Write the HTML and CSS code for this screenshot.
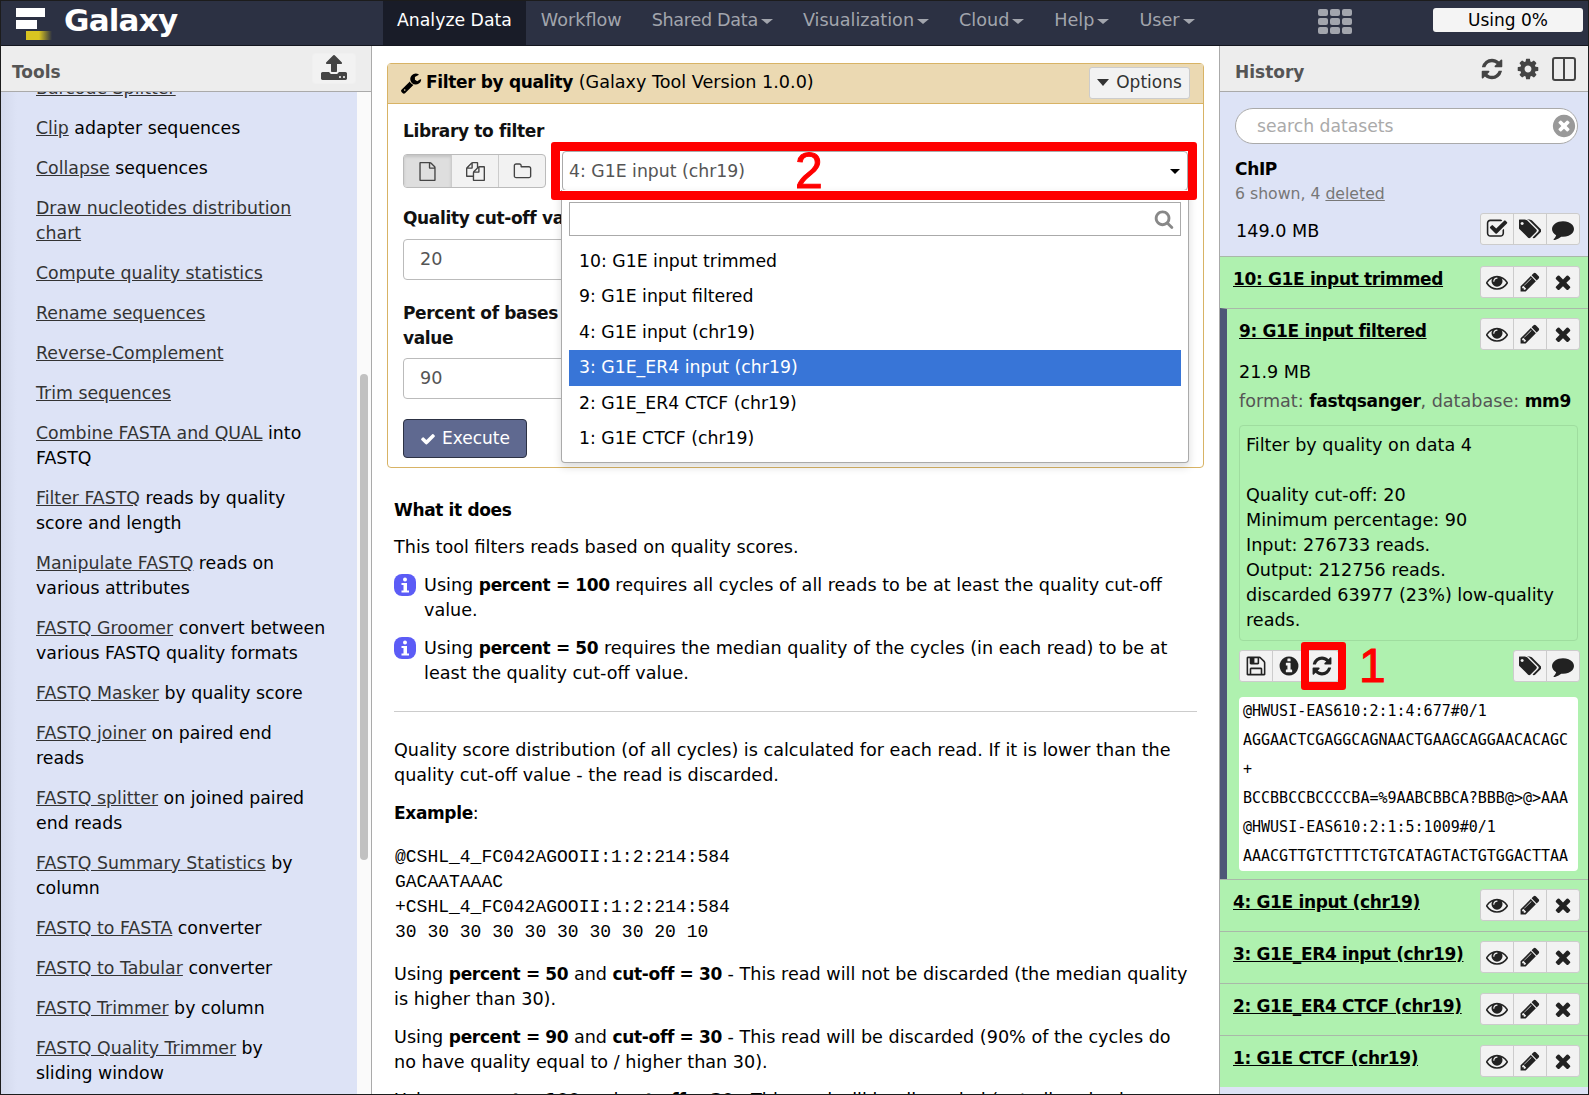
FILE: index.html
```html
<!DOCTYPE html>
<html lang="en">
<head>
    <meta charset="UTF-8">
    <title>Galaxy</title>
    <link rel="stylesheet" href="styles.css">
</head>
<body>
    <svg class="sprite" xmlns="http://www.w3.org/2000/svg">
        <symbol id="i-refresh" viewBox="0 0 1792 1792"><path d="M1639 1056q0 5-1 7-64 268-268 434.5t-478 166.5q-146 0-282.5-55t-243.5-157l-129 129q-19 19-45 19t-45-19-19-45v-448q0-26 19-45t45-19h448q26 0 45 19t19 45-19 45l-137 137q71 66 161 102t187 36q134 0 250-65t186-179q11-17 53-117 8-23 30-23h192q13 0 22.5 9.5t9.5 22.5zm25-800v448q0 26-19 45t-45 19h-448q-26 0-45-19t-19-45 19-45l138-138q-148-137-349-137-134 0-250 65t-186 179q-11 17-53 117-8 23-30 23h-199q-13 0-22.5-9.5t-9.5-22.5v-7q65-268 270-434.5t480-166.5q146 0 284 55.5t245 156.5l130-129q19-19 45-19t45 19 19 45z"/></symbol>
        <symbol id="i-cog" viewBox="0 0 1792 1792"><path d="M1152 896q0-106-75-181t-181-75-181 75-75 181 75 181 181 75 181-75 75-181zm512-109v222q0 12-8 23t-20 13l-185 28q-19 54-39 91 35 50 107 138 10 12 10 25t-9 23q-27 37-99 108t-94 71q-12 0-26-9l-138-108q-44 23-91 38-16 136-29 186-7 28-36 28h-222q-14 0-24.5-8.5t-11.5-21.5l-28-184q-49-16-90-37l-141 107q-10 9-25 9-14 0-25-11-126-114-165-168-7-10-7-23 0-12 8-23 15-21 51-66.5t54-70.5q-27-50-41-99l-183-27q-13-2-21-12.5t-8-23.5v-222q0-12 8-23t19-13l186-28q14-46 39-92-40-57-107-138-10-12-10-24 0-10 9-23 26-36 98.5-107.5t94.5-71.5q13 0 26 10l138 107q44-23 91-38 16-136 29-186 7-28 36-28h222q14 0 24.5 8.5t11.5 21.5l28 184q49 16 90 37l142-107q9-9 24-9 13 0 25 10 129 119 165 170 7 8 7 22 0 12-8 23-15 21-51 66.5t-54 70.5q26 50 41 98l183 28q13 2 21 12.5t8 23.5z"/></symbol>
        <symbol id="i-columns" viewBox="0 0 24 24"><rect x="1" y="1" width="22" height="22" rx="2" fill="none" stroke="currentColor" stroke-width="2"/><rect x="11" y="1" width="2" height="22"/></symbol>
        <symbol id="i-eye" viewBox="0 0 1792 1792"><path d="M1664 960q-152-236-381-353 61 104 61 225 0 185-131.5 316.5t-316.5 131.5-316.5-131.5-131.5-316.5q0-121 61-225-229 117-381 353 133 205 333.5 326.5t434.5 121.5 434.5-121.5 333.5-326.5zm-720-384q0-20-14-34t-34-14q-125 0-214.5 89.5t-89.5 214.5q0 20 14 34t34 14 34-14 14-34q0-86 61-147t147-61q20 0 34-14t14-34zm848 384q0 34-20 69-140 230-376.5 368.5t-499.5 138.5-499.5-139-376.5-368q-20-35-20-69t20-69q140-229 376.5-368t499.5-139 499.5 139 376.5 368q20 35 20 69z"/></symbol>
        <symbol id="i-pencil" viewBox="0 0 1792 1792"><path d="M491 1536l91-91-235-235-91 91v107h128v128h107zm523-928q0-22-22-22-10 0-17 7l-542 542q-7 7-7 17 0 22 22 22 10 0 17-7l542-542q7-7 7-17zm-54-192l416 416-832 832h-416v-416zm683 96q0 53-37 90l-166 166-416-416 166-165q36-38 90-38 53 0 91 38l235 234q37 39 37 91z"/></symbol>
        <symbol id="i-times" viewBox="0 0 1792 1792"><path d="M1490 1322q0 40-28 68l-136 136q-28 28-68 28t-68-28l-294-294-294 294q-28 28-68 28t-68-28l-136-136q-28-28-28-68t28-68l294-294-294-294q-28-28-28-68t28-68l136-136q28-28 68-28t68 28l294 294 294-294q28-28 68-28t68 28l136 136q28 28 28 68t-28 68l-294 294 294 294q28 28 28 68z"/></symbol>
        <symbol id="i-tags" viewBox="0 0 1792 1792"><path d="M384 448q0-53-37.5-90.5t-90.5-37.5-90.5 37.5-37.5 90.5 37.5 90.5 90.5 37.5 90.5-37.5 37.5-90.5zm1067 576q0 53-37 90l-491 492q-39 37-91 37-53 0-90-37l-715-716q-38-37-64.5-101t-26.5-117v-416q0-52 38-90t90-38h416q53 0 117 26.5t102 64.5l715 714q37 39 37 91zm384 0q0 53-37 90l-491 492q-39 37-91 37-36 0-59-14t-53-45l470-470q37-37 37-90 0-52-37-91l-715-714q-38-38-102-64.5t-117-26.5h224q53 0 117 26.5t102 64.5l715 714q37 39 37 91z"/></symbol>
        <symbol id="i-comment" viewBox="0 0 1792 1792"><path d="M1792 896q0 174-120 321.5t-326 233-450 85.5q-70 0-145-8-198 175-460 242-49 14-114 22-17 2-30.5-9t-17.5-29v-1q-3-4-.5-12t2-10 4.5-9.5l6-9 7-8.5 8-9q7-8 31-34.5t34.5-38 31-39.5 32.5-51 27-59 26-76q-157-89-247.5-220t-90.5-281q0-130 71-248.5t191-204.5 286-136.5 348-50.5q244 0 450 85.5t326 233 120 321.5z"/></symbol>
        <symbol id="i-check-square" viewBox="0 0 1792 1792"><path d="M1472 930v318q0 119-84.5 203.5t-203.5 84.5h-832q-119 0-203.5-84.5t-84.5-203.5v-832q0-119 84.5-203.5t203.5-84.5h832q63 0 117 25 15 7 18 23 3 17-9 29l-49 49q-10 10-23 10-3 0-9-2-23-6-45-6h-832q-66 0-113 47t-47 113v832q0 66 47 113t113 47h832q66 0 113-47t47-113v-254q0-13 9-22l64-64q10-10 23-10 6 0 12 3 20 8 20 29zm231-489l-814 814q-24 24-57 24t-57-24l-430-430q-24-24-24-57t24-57l110-110q24-24 57-24t57 24l263 263 647-647q24-24 57-24t57 24l110 110q24 24 24 57t-24 57z"/></symbol>
        <symbol id="i-info" viewBox="0 0 1792 1792"><path d="M1152 1376v-160q0-14-9-23t-23-9h-96v-512q0-14-9-23t-23-9h-320q-14 0-23 9t-9 23v160q0 14 9 23t23 9h96v320h-96q-14 0-23 9t-9 23v160q0 14 9 23t23 9h448q14 0 23-9t9-23zm-128-896v-160q0-14-9-23t-23-9h-192q-14 0-23 9t-9 23v160q0 14 9 23t23 9h192q14 0 23-9t9-23zm640 416q0 209-103 385.5t-279.5 279.5-385.5 103-385.5-103-279.5-279.5-103-385.5 103-385.5 279.5-279.5 385.5-103 385.5 103 279.5 279.5 103 385.5z"/></symbol>
        <symbol id="i-note" viewBox="0 0 22 22"><rect width="22" height="22" rx="8"/><circle cx="11" cy="5.5" r="2" fill="#fff"/><rect x="9.5" y="9" width="3.5" height="9" fill="#fff"/><rect x="7.5" y="9" width="3" height="2" fill="#fff"/><rect x="7.5" y="16.5" width="7.5" height="2" fill="#fff"/></symbol>
        <symbol id="i-save" viewBox="0 0 1792 1792"><path d="M512 1536h768v-384h-768v384zm896 0h128v-896q0-14-10-38.5t-20-34.5l-281-281q-10-10-34-20t-39-10v416q0 40-28 68t-68 28h-576q-40 0-68-28t-28-68v-416h-128v1280h128v-416q0-40 28-68t68-28h832q40 0 68 28t28 68v416zm-384-928v-320q0-13-9.5-22.5t-22.5-9.5h-192q-13 0-22.5 9.5t-9.5 22.5v320q0 13 9.5 22.5t22.5 9.5h192q13 0 22.5-9.5t9.5-22.5zm640 32v928q0 40-28 68t-68 28h-1344q-40 0-68-28t-28-68v-1344q0-40 28-68t68-28h928q40 0 88 20t76 48l280 280q28 28 48 76t20 88z"/></symbol>
        <symbol id="i-wrench" viewBox="0 0 1792 1792"><path d="M448 1472q0-26-19-45t-45-19-45 19-19 45 19 45 45 19 45-19 19-45zm644-420l-682 682q-37 37-90 37-52 0-91-37l-106-108q-38-36-38-90 0-53 38-91l681-681q39 98 114.5 173.5t173.5 114.5zm634-435q0 39-23 106-47 134-164.5 217.5t-258.5 83.5q-185 0-316.5-131.5t-131.5-316.5 131.5-316.5 316.5-131.5q58 0 121.5 16.5t107.5 46.5q16 11 16 28t-16 28l-293 169v224l193 107q5-3 79-48.5t135.5-81 70.5-35.5q15 0 23.5 10t8.5 25z"/></symbol>
        <symbol id="i-check" viewBox="0 0 1792 1792"><path d="M1671 566q0 40-28 68l-724 724-136 136q-28 28-68 28t-68-28l-136-136-362-362q-28-28-28-68t28-68l136-136q28-28 68-28t68 28l294 295 656-657q28-28 68-28t68 28l136 136q28 28 28 68z"/></symbol>
        <symbol id="i-search" viewBox="0 0 1792 1792"><path d="M1216 832q0-185-131.5-316.5t-316.5-131.5-316.5 131.5-131.5 316.5 131.5 316.5 316.5 131.5 316.5-131.5 131.5-316.5zm512 832q0 52-38 90t-90 38q-54 0-90-38l-343-342q-179 124-399 124-143 0-273.5-55.5t-225-150-150-225-55.5-273.5 55.5-273.5 150-225 225-150 273.5-55.5 273.5 55.5 225 150 150 225 55.5 273.5q0 220-124 399l343 343q37 37 37 90z"/></symbol>
        <symbol id="i-times-circle" viewBox="0 0 1792 1792"><path d="M1277 1122q0-26-19-45l-181-181 181-181q19-19 19-45 0-27-19-46l-90-90q-19-19-46-19-26 0-45 19l-181 181-181-181q-19-19-45-19-27 0-46 19l-90 90q-19 19-19 46 0 26 19 45l181 181-181 181q-19 19-19 45 0 27 19 46l90 90q19 19 46 19 26 0 45-19l181-181 181 181q19 19 45 19 27 0 46-19l90-90q19-19 19-46zm387-226q0 209-103 385.5t-279.5 279.5-385.5 103-385.5-103-279.5-279.5-103-385.5 103-385.5 279.5-279.5 385.5-103 385.5 103 279.5 279.5 103 385.5z"/></symbol>
        <symbol id="i-file" viewBox="0 0 1792 1792"><path d="M1596 380q28 28 48 76t20 88v1152q0 40-28 68t-68 28h-1344q-40 0-68-28t-28-68v-1600q0-40 28-68t68-28h896q40 0 88 20t76 48zm-444-244v376h376q-10-29-22-41l-313-313q-12-12-41-22zm384 1528v-1024h-416q-40 0-68-28t-28-68v-416h-768v1536h1280z"/></symbol>
        <symbol id="i-files" viewBox="0 0 1792 1792"><path d="M1696 384q40 0 68 28t28 68v1216q0 40-28 68t-68 28h-960q-40 0-68-28t-28-68v-288h-544q-40 0-68-28t-28-68v-672q0-40 20-88t48-76l408-408q28-28 76-48t88-20h416q40 0 68 28t28 68v328q68-40 128-40h416zm-544 213l-299 299h299v-299zm-640-384l-299 299h299v-299zm196 647l316-316v-416h-384v416q0 40-28 68t-68 28h-416v640h512v-256q0-40 20-88t48-76zm956 804v-1152h-384v416q0 40-28 68t-68 28h-416v640h896z"/></symbol>
        <symbol id="i-folder" viewBox="0 0 1792 1792"><path d="M1600 1312v-704q0-40-28-68t-68-28h-704q-40 0-68-28t-28-68v-64q0-40-28-68t-68-28h-320q-40 0-68 28t-28 68v960q0 40 28 68t68 28h1216q40 0 68-28t28-68zm128-704v704q0 92-66 158t-158 66h-1216q-92 0-158-66t-66-158v-960q0-92 66-158t158-66h320q92 0 158 66t66 158v32h672q92 0 158 66t66 158z"/></symbol>
        <symbol id="i-upload" viewBox="0 0 1792 1792"><path d="M1344 1472q0-26-19-45t-45-19-45 19-19 45 19 45 45 19 45-19 19-45zm256 0q0-26-19-45t-45-19-45 19-19 45 19 45 45 19 45-19 19-45zm128-224v320q0 40-28 68t-68 28h-1472q-40 0-68-28t-28-68v-320q0-40 28-68t68-28h427q21 56 70.5 92t110.5 36h256q61 0 110.5-36t70.5-92h427q40 0 68 28t28 68zm-325-648q-17 40-59 40h-256v448q0 26-19 45t-45 19h-256q-26 0-45-19t-19-45v-448h-256q-42 0-59-40-17-39 14-69l448-448q18-19 45-19t45 19l448 448q31 30 14 69z"/></symbol>
    </svg>

    <div class="app">
        <header class="masthead">
            <a href="#" class="brand">
                <span class="brand-icon"><i class="bar-a"></i><i class="bar-b"></i><i class="bar-c"></i></span>
                <span class="brand-name">Galaxy</span>
            </a>
            <nav class="nav">
                <a href="#" class="nav-item active">Analyze Data</a>
                <a href="#" class="nav-item">Workflow</a>
                <a href="#" class="nav-item caret tight">Shared Data</a>
                <a href="#" class="nav-item caret">Visualization</a>
                <a href="#" class="nav-item caret">Cloud</a>
                <a href="#" class="nav-item caret">Help</a>
                <a href="#" class="nav-item caret">User</a>
            </nav>
            <div class="apps-grid">
                <i></i><i></i><i></i><i></i><i></i><i></i><i></i><i></i><i></i>
            </div>
            <div class="quota">Using 0%</div>
        </header>

        <div class="main">
            <aside class="tools-panel">
                <div class="panel-head">
                    <span class="panel-title">Tools</span>
                    <button class="upload-btn"><svg class="icon"><use href="#i-upload"/></svg></button>
                </div>
                <div class="tools-body">
                    <ul class="tool-list">
                        <li><a href="#">Barcode Splitter</a></li>
                        <li><a href="#">Clip</a> adapter sequences</li>
                        <li><a href="#">Collapse</a> sequences</li>
                        <li><a href="#">Draw nucleotides distribution chart</a></li>
                        <li><a href="#">Compute quality statistics</a></li>
                        <li><a href="#">Rename sequences</a></li>
                        <li><a href="#">Reverse-Complement</a></li>
                        <li><a href="#">Trim sequences</a></li>
                        <li><a href="#">Combine FASTA and QUAL</a> into FASTQ</li>
                        <li><a href="#">Filter FASTQ</a> reads by quality score and length</li>
                        <li><a href="#">Manipulate FASTQ</a> reads on various attributes</li>
                        <li><a href="#">FASTQ Groomer</a> convert between various FASTQ quality formats</li>
                        <li><a href="#">FASTQ Masker</a> by quality score</li>
                        <li><a href="#">FASTQ joiner</a> on paired end<br>reads</li>
                        <li><a href="#">FASTQ splitter</a> on joined paired end reads</li>
                        <li><a href="#">FASTQ Summary Statistics</a> by column</li>
                        <li><a href="#">FASTQ to FASTA</a> converter</li>
                        <li><a href="#">FASTQ to Tabular</a> converter</li>
                        <li><a href="#">FASTQ Trimmer</a> by column</li>
                        <li><a href="#">FASTQ Quality Trimmer</a> by<br>sliding window</li>
                    </ul>
                    <div class="scroll-track"><div class="scroll-thumb"></div></div>
                </div>
            </aside>

            <section class="center">
                <div class="form-box">
                    <div class="form-head">
                        <svg class="icon wrench"><use href="#i-wrench"/></svg>
                        <span class="form-title"><b>Filter by quality</b> (Galaxy Tool Version 1.0.0)</span>
                        <button class="options-btn"><span class="tri"></span>Options</button>
                    </div>
                    <div class="form-body">
                        <label class="field-label">Library to filter</label>
                        <div class="select-row">
                            <div class="btn-group">
                                <span class="cell on"><svg class="icon"><use href="#i-file"/></svg></span>
                                <span class="cell"><svg class="icon"><use href="#i-files"/></svg></span>
                                <span class="cell"><svg class="icon"><use href="#i-folder"/></svg></span>
                            </div>
                            <div class="select-box">
                                <span class="select-value">4: G1E input (chr19)</span>
                                <span class="select-caret"></span>
                                <div class="dropdown">
                                    <div class="drop-search"><svg class="icon"><use href="#i-search"/></svg></div>
                                    <ul class="drop-list">
                                        <li>10: G1E input trimmed</li>
                                        <li>9: G1E input filtered</li>
                                        <li>4: G1E input (chr19)</li>
                                        <li class="hl">3: G1E_ER4 input (chr19)</li>
                                        <li>2: G1E_ER4 CTCF (chr19)</li>
                                        <li>1: G1E CTCF (chr19)</li>
                                    </ul>
                                </div>
                                <div class="mark mark-select"></div>
                                <span class="mark-num num-two">2</span>
                            </div>
                        </div>
                        <label class="field-label after-select">Quality cut-off value</label>
                        <div class="text-input">20</div>
                        <label class="field-label after-input">Percent of bases in sequence that must have quality equal to / higher than cut-off<br>value</label>
                        <div class="text-input">90</div>
                        <button class="execute"><svg class="icon"><use href="#i-check"/></svg>Execute</button>
                    </div>
                </div>

                <div class="help">
                    <p class="help-title"><b>What it does</b></p>
                    <p>This tool filters reads based on quality scores.</p>
                    <div class="note">
                        <svg class="icon info-icon"><use href="#i-note"/></svg>
                        <p>Using <b>percent = 100</b> requires all cycles of all reads to be at least the quality cut-off value.</p>
                    </div>
                    <div class="note">
                        <svg class="icon info-icon"><use href="#i-note"/></svg>
                        <p>Using <b>percent = 50</b> requires the median quality of the cycles (in each read) to be at least the quality cut-off value.</p>
                    </div>
                    <hr>
                    <p>Quality score distribution (of all cycles) is calculated for each read. If it is lower than the quality cut-off value - the read is discarded.</p>
                    <p><b>Example</b>:</p>
<pre>@CSHL_4_FC042AGOOII:1:2:214:584
GACAATAAAC
+CSHL_4_FC042AGOOII:1:2:214:584
30 30 30 30 30 30 30 30 20 10</pre>
                    <p>Using <b>percent = 50</b> and <b>cut-off = 30</b> - This read will not be discarded (the median quality is higher than 30).</p>
                    <p>Using <b>percent = 90</b> and <b>cut-off = 30</b> - This read will be discarded (90% of the cycles do no have quality equal to / higher than 30).</p>
                    <p>Using <b>percent = 100</b> and <b>cut-off = 30</b> - This read will be discarded (not all cycles have quality equal to / higher than 30).</p>
                </div>
            </section>

            <aside class="history">
                <div class="panel-head">
                    <span class="panel-title">History</span>
                    <div class="history-tools">
                        <svg class="icon"><use href="#i-refresh"/></svg>
                        <svg class="icon"><use href="#i-cog"/></svg>
                        <svg class="icon"><use href="#i-columns"/></svg>
                    </div>
                </div>
                <div class="history-body">
                    <div class="history-top">
                        <div class="search-pill">
                            <span>search datasets</span>
                            <svg class="icon"><use href="#i-times-circle"/></svg>
                        </div>
                        <div class="hist-name">ChIP</div>
                        <div class="hist-count">6 shown, 4 <a href="#">deleted</a></div>
                        <div class="hist-size">
                            <span class="hist-total">149.0 MB</span>
                            <div class="icon-btns">
                                <span><svg class="icon"><use href="#i-check-square"/></svg></span>
                                <span><svg class="icon"><use href="#i-tags"/></svg></span>
                                <span><svg class="icon"><use href="#i-comment"/></svg></span>
                            </div>
                        </div>
                    </div>

                    <div class="dataset">
                        <div class="ds-row">
                            <a href="#" class="ds-name">10: G1E input trimmed</a>
                            <div class="icon-btns">
                                <span><svg class="icon"><use href="#i-eye"/></svg></span>
                                <span><svg class="icon"><use href="#i-pencil"/></svg></span>
                                <span><svg class="icon"><use href="#i-times"/></svg></span>
                            </div>
                        </div>
                    </div>

                    <div class="dataset open">
                        <div class="ds-row">
                            <a href="#" class="ds-name">9: G1E input filtered</a>
                            <div class="icon-btns">
                                <span><svg class="icon"><use href="#i-eye"/></svg></span>
                                <span><svg class="icon"><use href="#i-pencil"/></svg></span>
                                <span><svg class="icon"><use href="#i-times"/></svg></span>
                            </div>
                        </div>
                        <div class="ds-size">21.9 MB</div>
                        <div class="ds-format">format: <b>fastqsanger</b>, database: <b>mm9</b></div>
                        <div class="ds-info">Filter by quality on data 4<br><br>Quality cut-off: 20<br>Minimum percentage: 90<br>Input: 276733 reads.<br>Output: 212756 reads.<br>discarded 63977 (23%) low-quality reads.</div>
                        <div class="ds-actions">
                            <div class="icon-btns">
                                <span><svg class="icon"><use href="#i-save"/></svg></span>
                                <span><svg class="icon"><use href="#i-info"/></svg></span>
                                <span class="rerun"><svg class="icon"><use href="#i-refresh"/></svg><i class="mark mark-rerun"></i><i class="mark-num num-one">1</i></span>
                            </div>
                            <div class="icon-btns">
                                <span><svg class="icon"><use href="#i-tags"/></svg></span>
                                <span><svg class="icon"><use href="#i-comment"/></svg></span>
                            </div>
                        </div>
                        <div class="ds-peek">
                            <div>@HWUSI-EAS610:2:1:4:677#0/1</div>
                            <div>AGGAACTCGAGGCAGNAACTGAAGCAGGAACACAGC</div>
                            <div>+</div>
                            <div>BCCBBCCBCCCCBA=%9AABCBBCA?BBB@&gt;@&gt;AAA</div>
                            <div>@HWUSI-EAS610:2:1:5:1009#0/1</div>
                            <div>AAACGTTGTCTTTCTGTCATAGTACTGTGGACTTAA</div>
                        </div>
                    </div>

                    <div class="dataset">
                        <div class="ds-row">
                            <a href="#" class="ds-name">4: G1E input (chr19)</a>
                            <div class="icon-btns">
                                <span><svg class="icon"><use href="#i-eye"/></svg></span>
                                <span><svg class="icon"><use href="#i-pencil"/></svg></span>
                                <span><svg class="icon"><use href="#i-times"/></svg></span>
                            </div>
                        </div>
                    </div>
                    <div class="dataset">
                        <div class="ds-row">
                            <a href="#" class="ds-name">3: G1E_ER4 input (chr19)</a>
                            <div class="icon-btns">
                                <span><svg class="icon"><use href="#i-eye"/></svg></span>
                                <span><svg class="icon"><use href="#i-pencil"/></svg></span>
                                <span><svg class="icon"><use href="#i-times"/></svg></span>
                            </div>
                        </div>
                    </div>
                    <div class="dataset">
                        <div class="ds-row">
                            <a href="#" class="ds-name">2: G1E_ER4 CTCF (chr19)</a>
                            <div class="icon-btns">
                                <span><svg class="icon"><use href="#i-eye"/></svg></span>
                                <span><svg class="icon"><use href="#i-pencil"/></svg></span>
                                <span><svg class="icon"><use href="#i-times"/></svg></span>
                            </div>
                        </div>
                    </div>
                    <div class="dataset">
                        <div class="ds-row">
                            <a href="#" class="ds-name">1: G1E CTCF (chr19)</a>
                            <div class="icon-btns">
                                <span><svg class="icon"><use href="#i-eye"/></svg></span>
                                <span><svg class="icon"><use href="#i-pencil"/></svg></span>
                                <span><svg class="icon"><use href="#i-times"/></svg></span>
                            </div>
                        </div>
                    </div>
                </div>
            </aside>
        </div>
    </div>
</body>
</html>
```
FILE: styles.css
```css
* {
    box-sizing: border-box;
}
html, body {
    margin: 0;
    padding: 0;
    height: 100%;
    overflow: hidden;
}
body {
    font-family: "DejaVu Sans", sans-serif;
    font-size: 17.6px;
    line-height: 25px;
    color: #000;
    background-color: #fff;
}
a {
    color: inherit;
}
p {
    margin: 0;
}
i {
    font-style: normal;
}
button {
    font: inherit;
}
b, .field-label, .ds-name, .hist-name {
    font-size: 17px;
    font-weight: bold;
    letter-spacing: -0.35px;
}
.sprite {
    display: none;
}
.icon {
    display: block;
    fill: currentColor;
}
.app {
    height: 100vh;
    border: 1px solid #1c1c1c;
    display: flex;
    flex-direction: column;
    overflow: hidden;
}

/* top bar */
.masthead {
    height: 45px;
    flex: none;
    display: flex;
    align-items: stretch;
    background-color: #2c3143;
    border-bottom: 1px solid #14161f;
}
.brand {
    width: 382px;
    flex: none;
    display: flex;
    align-items: center;
    text-decoration: none;
    color: #fff;
    padding-left: 15px;
}
.brand-icon {
    width: 36px;
    height: 31px;
    margin-right: 12px;
    display: block;
}
.brand-icon i {
    display: block;
    height: 9px;
}
.bar-a {
    width: 29px;
    background-color: #fff;
    margin-bottom: 3px;
}
.bar-b {
    width: 21px;
    background-color: #fff;
    margin-bottom: 2px;
}
.bar-c {
    width: 26px;
    margin-left: 10px;
    background: linear-gradient(to right, #d9c421 50%, #2c3143);
}
.brand-name {
    font-size: 31px;
    font-weight: bold;
    letter-spacing: -0.8px;
    padding-bottom: 6px;
}
.nav {
    display: flex;
    flex: 1;
}
.nav-item {
    display: flex;
    align-items: center;
    padding: 0 15px 6px;
    text-decoration: none;
    color: #a2a5ad;
    white-space: nowrap;
}
.nav-item.active {
    padding: 0 14px 6px;
    font-size: 17.3px;
    background-color: #191c28;
    color: #fff;
}
.nav-item.tight {
    letter-spacing: -0.3px;
}
.caret::after {
    content: "";
    margin-left: 3px;
    margin-top: 2px;
    border-top: 5px solid #a2a5ad;
    border-left: 6px solid transparent;
    border-right: 6px solid transparent;
}
.apps-grid {
    width: 34px;
    height: 27px;
    margin: 8px 81px 0 0;
    display: grid;
    grid-template-columns: repeat(3, 10px);
    grid-template-rows: repeat(3, 7px);
    gap: 2px;
}
.apps-grid i {
    background-color: #a2a5ad;
    border-radius: 2px;
}
.quota {
    width: 150px;
    height: 24px;
    margin: 7px 5px 0 0;
    background-color: #f4f4f4;
    border-radius: 3px;
    text-align: center;
    font-size: 17px;
    line-height: 24px;
}

/* page columns */
.main {
    flex: 1;
    display: flex;
    min-height: 0;
}
.panel-head {
    height: 46px;
    flex: none;
    display: flex;
    justify-content: space-between;
    align-items: center;
    background-color: #ededed;
    border-bottom: 1px solid #aaa;
}
.panel-title {
    font-size: 17px;
    font-weight: bold;
    color: #555;
    padding-top: 8px;
}

/* tools */
.tools-panel {
    width: 371px;
    flex: none;
    display: flex;
    flex-direction: column;
    border-right: 1px solid #aaa;
}
.tools-panel .panel-head {
    padding: 0 15px 0 11px;
}
.upload-btn {
    width: 44px;
    height: 31px;
    border: 1px solid #f0f0f0;
    border-radius: 3px;
    background-color: #f2f2f2;
    color: #444;
    padding: 0;
    display: flex;
    align-items: center;
    justify-content: center;
    margin-top: -1px;
}
.upload-btn .icon {
    width: 28px;
    height: 28px;
}
.tools-body {
    flex: 1;
    min-height: 0;
    display: flex;
    overflow: hidden;
}
.tool-list {
    list-style: none;
    margin: 0;
    width: 356px;
    flex: none;
    padding: 0 27px 0 35px;
    font-size: 17.35px;
    background: linear-gradient(to right, #d3d9ec, #dde3f6 16px);
}
.tool-list li {
    margin-bottom: 15px;
}
.tool-list li:first-child {
    margin-top: -16px;
}
.tool-list a {
    color: #333;
}
.scroll-track {
    flex: 1;
    background-color: #fafafa;
    padding: 282px 0 0 3px;
}
.scroll-thumb {
    width: 8px;
    height: 486px;
    border-radius: 4px;
    background-color: #c1c1c1;
}

/* tool form */
.center {
    flex: 1;
    min-width: 0;
    padding: 17px 15px 0;
    overflow: hidden;
}
.form-box {
    border: 1px solid #d8b365;
    border-radius: 4px;
    height: 405px;
}
.form-head {
    height: 40px;
    display: flex;
    align-items: center;
    padding: 0 13px 2px 12px;
    background-color: #ebd9b2;
    border-bottom: 1px solid #d8b365;
}
.wrench {
    width: 22px;
    height: 22px;
    margin-right: 4px;
}
.form-title {
    flex: 1;
}
.options-btn {
    width: 101px;
    height: 32px;
    border: 1px solid #ccc;
    border-radius: 3px;
    background-color: #f2f2f2;
    padding: 0;
    color: #333;
    font-size: 17px;
    display: flex;
    align-items: center;
    justify-content: center;
}
.tri {
    border-top: 7px solid #333;
    border-left: 6px solid transparent;
    border-right: 6px solid transparent;
    margin-right: 7px;
}
.form-body {
    padding: 15px 15px 0;
}
.field-label {
    display: block;
    color: #111;
}
.field-label.after-select {
    margin-top: 15px;
}
.field-label.after-input {
    margin-top: 21px;
}
.select-row {
    display: flex;
    align-items: center;
    gap: 16px;
    margin-top: 7px;
    height: 40px;
}
.btn-group {
    display: flex;
    flex: none;
    height: 34px;
    border: 1px solid #bbb;
    border-radius: 4px;
    background-color: #f2f2f2;
    color: #444;
    overflow: hidden;
}
.cell {
    width: 47px;
    display: flex;
    align-items: center;
    justify-content: center;
    border-left: 1px solid #ccc;
}
.cell:first-child {
    border-left: none;
}
.cell.on {
    background-color: #dedede;
    box-shadow: inset 0 2px 3px rgba(0, 0, 0, 0.12);
}
.cell .icon {
    width: 19px;
    height: 19px;
}
.select-box {
    position: relative;
    flex: 1;
    height: 40px;
    border: 1px solid #aaa;
    border-radius: 4px;
    padding: 0 6px;
    font-size: 17.3px;
    line-height: 38px;
    color: #555;
    background-color: #fff;
}
.select-caret {
    position: absolute;
    right: 7px;
    top: 17px;
    border-top: 5px solid #000;
    border-left: 5px solid transparent;
    border-right: 5px solid transparent;
}
.dropdown {
    position: absolute;
    top: 100%;
    left: -2px;
    right: -2px;
    height: 273px;
    padding: 12px 7px 0;
    background-color: #fff;
    border: 1px solid #aaa;
    border-top: none;
    border-radius: 0 0 4px 4px;
    box-shadow: 0 4px 8px rgba(0, 0, 0, 0.15);
    color: #000;
    z-index: 2;
}
.drop-search {
    height: 34px;
    border: 1px solid #aaa;
    display: flex;
    justify-content: flex-end;
    align-items: center;
    padding-right: 6px;
    color: #888;
}
.drop-search .icon {
    width: 20px;
    height: 20px;
}
.drop-list {
    list-style: none;
    margin: 7.5px 0 0;
    padding: 0;
}
.drop-list li {
    height: 35.5px;
    line-height: 35.5px;
    padding-left: 10px;
}
.drop-list .hl {
    background-color: #3875d7;
    color: #fff;
}

/* red callouts drawn over the screenshot */
.mark {
    position: absolute;
    border: 9px solid #f00;
    border-radius: 3px;
    z-index: 3;
}
.mark-select {
    top: -10px;
    bottom: -10px;
    left: -12px;
    right: -10px;
}
.mark-rerun {
    top: -9px;
    bottom: -9px;
    left: -5px;
    right: -8px;
    border-width: 8px;
}
.mark-num {
    position: absolute;
    font-family: "Liberation Sans", Arial, sans-serif;
    font-weight: normal;
    -webkit-text-stroke: 1px #f00;
    color: #f00;
    z-index: 3;
}
.num-two {
    left: 232px;
    top: -4px;
    font-size: 50px;
    line-height: 46px;
}
.num-one {
    left: 53px;
    top: -7px;
    font-size: 48px;
    line-height: 44px;
}
.text-input {
    height: 41px;
    margin-top: 8px;
    padding: 0 16px;
    border: 1px solid #bbb;
    border-radius: 4px;
    line-height: 39px;
    color: #555;
}
.after-input + .text-input {
    margin-top: 7px;
}
.execute {
    display: flex;
    align-items: center;
    justify-content: center;
    width: 124px;
    height: 39px;
    margin-top: 20px;
    background-color: #5f6990;
    border: 1px solid #2c3143;
    border-radius: 4px;
    color: #fff;
    font-size: 17px;
    padding: 0;
}
.execute .icon {
    width: 16px;
    height: 16px;
    margin-right: 6px;
}

/* help text */
.help {
    padding: 0 7px;
}
.help p {
    margin-bottom: 13px;
}
.help .help-title {
    margin: 30px 0 12px;
}
.note {
    display: flex;
    gap: 8px;
}
.info-icon {
    flex: none;
    width: 22px;
    height: 22px;
    color: #5c5cf6;
    margin-top: 1px;
}
.help hr {
    border: none;
    border-top: 1px solid #ccc;
    margin: 12px 0 26px;
}
.help pre {
    font-family: "Liberation Mono", "Courier New", monospace;
    font-size: 18px;
    line-height: 25px;
    margin: 19px 0 17px;
    padding-left: 1px;
}

/* history */
.history {
    width: 369px;
    flex: none;
    display: flex;
    flex-direction: column;
    border-left: 1px solid #aaa;
}
.history .panel-head {
    padding: 0 12px 0 15px;
}
.history-tools {
    display: flex;
    gap: 12px;
    color: #444;
}
.history-tools .icon {
    width: 24px;
    height: 24px;
}
.history-body {
    flex: 1;
    min-height: 0;
    background-color: #dde3f6;
    overflow: hidden;
}
.history-top {
    height: 164px;
    padding: 16px 10px 0 15px;
}
.search-pill {
    height: 36px;
    border: 1px solid #aaa;
    border-radius: 18px;
    background-color: #fff;
    color: #aaa;
    font-size: 17.2px;
    padding-left: 21px;
    display: flex;
    align-items: center;
    justify-content: space-between;
}
.search-pill .icon {
    width: 26px;
    height: 26px;
    color: #999;
}
.hist-name {
    margin-top: 13px;
}
.hist-count {
    color: #777;
    font-size: 15.7px;
    margin-top: -1px;
}
.hist-size {
    display: flex;
    justify-content: space-between;
    align-items: center;
    margin-top: 7px;
    padding-left: 1px;
}
.hist-total {
    margin-top: 4px;
}
.icon-btns {
    display: flex;
    flex: none;
    height: 32px;
    border: 1px solid #ccc;
    border-radius: 3px;
    background-color: #f2f2f2;
    color: #222;
}
.icon-btns:last-child {
    margin-right: -2px;
}
.icon-btns span {
    width: 33px;
    display: flex;
    align-items: center;
    justify-content: center;
    border-left: 1px solid #ccc;
}
.icon-btns span:first-child {
    width: 32px;
    border-left: none;
}
.icon-btns .icon {
    width: 22px;
    height: 22px;
}
.dataset {
    background-color: #aff1af;
    border-top: 1px solid #a9b8a9;
    padding: 9px 10px 10px 13px;
    height: 52px;
}
.dataset.open {
    height: auto;
    border-left: 7px solid #4e5777;
    padding-left: 12px;
    padding-bottom: 8px;
}
.ds-row {
    display: flex;
    justify-content: space-between;
    align-items: flex-start;
}
.ds-name {
    color: #000;
    padding-top: 1px;
}
.ds-size {
    margin-top: 10px;
}
.ds-format {
    margin-top: 4px;
    color: #555;
}
.ds-format b {
    color: #000;
}
.ds-info {
    margin-top: 11px;
    padding: 7px 6px 7px 6px;
    border: 1px solid #9fdd9f;
    border-radius: 4px;
}
.ds-actions {
    display: flex;
    justify-content: space-between;
    margin-top: 9px;
}
.rerun {
    position: relative;
}
.ds-peek {
    margin-top: 15px;
    padding: 0 3px 0 4px;
    background-color: #fff;
    border-radius: 4px;
    font-family: "DejaVu Sans Mono", monospace;
    font-size: 15px;
    line-height: 29px;
    white-space: nowrap;
}
```
